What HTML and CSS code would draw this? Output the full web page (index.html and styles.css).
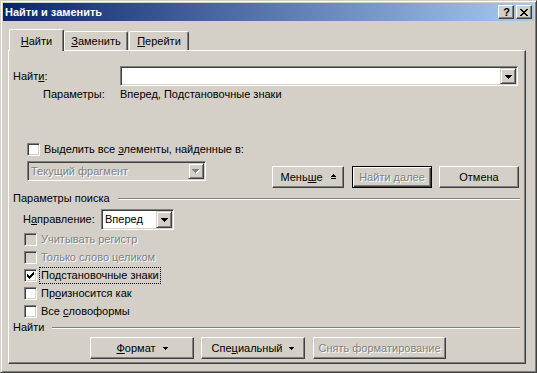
FILE: index.html
```html
<!DOCTYPE html>
<html lang="ru">
<head>
    <meta charset="UTF-8">
    <meta name="viewport" content="width=device-width, initial-scale=1.0">
    <title>Найти и заменить</title>
    <link rel="stylesheet" href="styles.css">
</head>
<body>
    <div class="window">
        <div class="titlebar">
            <span class="title">Найти и заменить</span>
            <span class="tb-btn tb-help">?</span>
            <span class="tb-btn">
                <svg width="8" height="7" viewBox="0 0 8 7" shape-rendering="crispEdges"><path d="M0 0h2v1H0zM6 0h2v1H6zM1 1h2v1H1zM5 1h2v1H5zM2 2h4v1H2zM3 3h2v1H3zM2 4h4v1H2zM1 5h2v1H1zM5 5h2v1H5zM0 6h2v1H0zM6 6h2v1H6z" fill="#000"/></svg>
            </span>
        </div>

        <div class="client">
            <div class="tabs">
                <div class="tab tab-active tab-find"><u>Н</u>айти</div>
                <div class="tab tab-replace"><u>З</u>аменить</div>
                <div class="tab tab-goto"><u>П</u>ерейти</div>
            </div>

            <div class="panel">
                <div class="find-row">
                    <span class="find-label">Найт<u>и</u>:</span>
                    <div class="combo find-combo">
                        <span class="combo-text"></span>
                        <span class="drop">
                            <svg width="7" height="4" viewBox="0 0 7 4" shape-rendering="crispEdges"><path d="M0 0h7v1H0zM1 1h5v1H1zM2 2h3v1H2zM3 3h1v1H3z" fill="#000"/></svg>
                        </span>
                    </div>
                </div>

                <div class="params-row">
                    <span class="params-label">Параметры:</span>
                    <span>Вперед, Подстановочные знаки</span>
                </div>

                <div class="check-row highlight-row">
                    <span class="check"></span>
                    <span class="check-label">Выделить все <u>э</u>лементы, найденные в:</span>
                </div>

                <div class="action-row">
                    <div class="combo combo-disabled scope-combo">
                        <span class="combo-text">Текущий фрагмент</span>
                        <span class="drop">
                            <svg width="8" height="5" viewBox="0 0 8 5" shape-rendering="crispEdges"><path d="M1 1h7v1H1zM2 2h5v1H2zM3 3h3v1H3zM4 4h1v1H4z" fill="#fff"/><path d="M0 0h7v1H0zM1 1h5v1H1zM2 2h3v1H2zM3 3h1v1H3z" fill="#808080"/></svg>
                        </span>
                    </div>
                    <div class="actions">
                        <div class="btn btn-less">Мень<u>ш</u>е
                            <svg width="5" height="5" viewBox="0 0 5 5" shape-rendering="crispEdges"><path d="M2 0h1v1H2zM1 1h3v1H1zM0 2h5v1H0zM0 4h5v1H0z" fill="#000"/></svg>
                        </div>
                        <div class="btn btn-default btn-disabled btn-next">Найти далее</div>
                        <div class="btn btn-cancel">Отмена</div>
                    </div>
                </div>

                <div class="group-title group-search">
                    <span>Параметры поиска</span>
                    <span class="groove"></span>
                </div>

                <div class="direction-row">
                    <span class="direction-label">Н<u>а</u>правление:</span>
                    <div class="combo direction-combo">
                        <span class="combo-text">Вперед</span>
                        <span class="drop">
                            <svg width="7" height="4" viewBox="0 0 7 4" shape-rendering="crispEdges"><path d="M0 0h7v1H0zM1 1h5v1H1zM2 2h3v1H2zM3 3h1v1H3z" fill="#000"/></svg>
                        </span>
                    </div>
                </div>

                <div class="options">
                    <div class="check-row option disabled">
                        <span class="check"></span>
                        <span class="check-label">Учитывать регистр</span>
                    </div>
                    <div class="check-row option disabled">
                        <span class="check"></span>
                        <span class="check-label">Только слово целиком</span>
                    </div>
                    <div class="check-row option">
                        <span class="check">
                            <svg width="13" height="13" viewBox="0 0 13 13" shape-rendering="crispEdges"><path d="M3 5h1v3H3zM4 6h1v3H4zM5 7h1v3H5zM6 6h1v3H6zM7 5h1v3H7zM8 4h1v3H8zM9 3h1v3H9z" fill="#000"/></svg>
                        </span>
                        <span class="check-label focused">Подстановочные знаки</span>
                    </div>
                    <div class="check-row option">
                        <span class="check"></span>
                        <span class="check-label">Пр<u>о</u>износится как</span>
                    </div>
                    <div class="check-row option">
                        <span class="check"></span>
                        <span class="check-label">Все <u>с</u>ловоформы</span>
                    </div>
                </div>

                <div class="group-title group-find">
                    <span>Найти</span>
                    <span class="groove"></span>
                </div>

                <div class="bottom-row">
                    <div class="btn btn-format"><u>Ф</u>ормат
                        <svg width="5" height="3" viewBox="0 0 5 3" shape-rendering="crispEdges"><path d="M0 0h5v1H0zM1 1h3v1H1zM2 2h1v1H2z" fill="#000"/></svg>
                    </div>
                    <div class="btn btn-special">Спе<u>ц</u>иальный
                        <svg width="5" height="3" viewBox="0 0 5 3" shape-rendering="crispEdges"><path d="M0 0h5v1H0zM1 1h3v1H1zM2 2h1v1H2z" fill="#000"/></svg>
                    </div>
                    <div class="btn btn-disabled btn-clear">Снять форматирование</div>
                </div>
            </div>
        </div>
    </div>
</body>
</html>
```

FILE: styles.css
```css
body {
    margin: 0;
    background-color: #D4D0C8;
    font-family: "Liberation Sans", Arial, sans-serif;
    font-size: 11px;
    line-height: 13px;
    color: #000;
}
u {
    text-decoration: underline;
    text-underline-offset: 1px;
}
.window {
    width: 537px;
    height: 373px;
    box-sizing: border-box;
    border: 1px solid;
    border-color: #D4D0C8 #404040 #404040 #D4D0C8;
    box-shadow: inset 1px 1px #fff, inset -1px -1px #808080;
    padding: 2px;
    display: flex;
    flex-direction: column;
}
.titlebar {
    height: 18px;
    flex: none;
    display: flex;
    align-items: center;
    padding: 0 2px 0 2px;
    background: linear-gradient(to right, #0A246A, #A6CAF0);
}
.title {
    color: #fff;
    font-weight: bold;
    margin-right: auto;
}
.tb-btn {
    width: 16px;
    height: 14px;
    box-sizing: border-box;
    background-color: #D4D0C8;
    border: 1px solid;
    border-color: #fff #404040 #404040 #fff;
    box-shadow: inset -1px -1px #808080;
    display: flex;
    align-items: center;
    justify-content: center;
}
.tb-help {
    margin-right: 2px;
    font-weight: bold;
    font-size: 11px;
    padding-left: 1px;
}
.client {
    flex: 1;
    display: flex;
    flex-direction: column;
    padding: 8px 8px 6px 5px;
}
.tabs {
    height: 21px;
    display: flex;
    align-items: flex-end;
    padding-left: 1px;
}
.tab {
    height: 19px;
    box-sizing: border-box;
    border-top: 1px solid #fff;
    border-left: 1px solid #fff;
    border-right: 1px solid #404040;
    border-radius: 2px 2px 0 0;
    box-shadow: inset -1px 0 #808080;
    padding-top: 3px;
    text-align: center;
    background-color: #D4D0C8;
}
.tab-active {
    height: 22px;
    margin-bottom: -1px;
    padding-top: 5px;
    position: relative;
    z-index: 1;
}
.tab-find {
    width: 55px;
}
.tab-replace {
    width: 64px;
}
.tab-goto {
    width: 60px;
    margin-left: 1px;
}
.panel {
    flex: 1;
    border: 1px solid;
    border-color: #fff #404040 #404040 #fff;
    box-shadow: inset -1px -1px #808080;
    padding-left: 4px;
}
.find-row {
    margin-top: 15px;
    height: 20px;
    display: flex;
    align-items: center;
}
.find-label {
    width: 107px;
}
.combo {
    box-sizing: border-box;
    height: 20px;
    border: 1px solid;
    border-color: #808080 #fff #fff #808080;
    box-shadow: inset 1px 1px #404040, inset -1px -1px #D4D0C8;
    background-color: #fff;
    padding: 2px 2px 2px 3px;
    display: flex;
    align-items: center;
}
.combo-text {
    flex: 1;
}
.drop {
    width: 16px;
    height: 16px;
    box-sizing: border-box;
    background-color: #D4D0C8;
    border: 1px solid;
    border-color: #D4D0C8 #404040 #404040 #D4D0C8;
    box-shadow: inset 1px 1px #fff, inset -1px -1px #808080;
    display: flex;
    align-items: center;
    justify-content: center;
    margin-right: -1px;
    padding-top: 1px;
}
.find-combo {
    width: 398px;
}
.params-row {
    margin-top: 2px;
    display: flex;
}
.params-label {
    margin-left: 30px;
    width: 77px;
}
.check-row {
    display: flex;
    align-items: center;
}
.check {
    width: 13px;
    height: 13px;
    flex: none;
    box-sizing: border-box;
    border: 1px solid;
    border-color: #808080 #fff #fff #808080;
    box-shadow: inset 1px 1px #404040, inset -1px -1px #D4D0C8;
    background-color: #fff;
    position: relative;
}
.check svg {
    position: absolute;
    left: -1px;
    top: -1px;
}
.check-label {
    margin-left: 2px;
    padding: 1px;
    border: 1px dotted transparent;
}
.check-label.focused {
    border-color: #000;
}
.highlight-row {
    margin-top: 40px;
    margin-left: 14px;
    height: 17px;
}
.action-row {
    margin-top: 3px;
    display: flex;
    align-items: flex-start;
}
.scope-combo {
    margin-left: 14px;
    width: 179px;
    background-color: #D4D0C8;
}
.combo-disabled .combo-text {
    color: #808080;
    text-shadow: 1px 1px #fff;
}
.actions {
    margin-top: 5px;
    margin-left: 66px;
    display: flex;
}
.btn {
    height: 22px;
    box-sizing: border-box;
    border: 1px solid;
    border-color: #fff #404040 #404040 #fff;
    box-shadow: inset -1px -1px #808080;
    display: flex;
    align-items: center;
    justify-content: center;
}
.btn-default {
    border-color: #000;
    box-shadow: inset 1px 1px #fff, inset -1px -1px #404040, inset -2px -2px #808080;
}
.btn-disabled {
    color: #808080;
    text-shadow: 1px 1px #fff;
}
.btn-less {
    width: 72px;
}
.btn-less svg {
    margin-left: 8px;
    margin-top: -2px;
}
.btn-next {
    width: 80px;
    margin-left: 8px;
}
.btn-cancel {
    width: 80px;
    margin-left: 7px;
}
.group-title {
    display: flex;
    align-items: center;
    padding-right: 5px;
}
.group-title .groove {
    flex: 1;
    height: 2px;
    box-sizing: border-box;
    border-top: 1px solid #808080;
    border-bottom: 1px solid #fff;
    margin-left: 8px;
}
.group-search {
    margin-top: 4px;
}
.direction-row {
    margin-top: 4px;
    display: flex;
    align-items: center;
}
.direction-label {
    margin-left: 10px;
    width: 78px;
}
.direction-combo {
    width: 73px;
    height: 21px;
}
.direction-combo .drop {
    height: 17px;
}
.options {
    display: flex;
    flex-direction: column;
}
.option {
    height: 18px;
    margin-left: 11px;
}
.option.disabled .check {
    background-color: #D4D0C8;
}
.option.disabled .check-label {
    color: #808080;
    text-shadow: 1px 1px #fff;
}
.group-find {
    margin-top: 1px;
}
.bottom-row {
    margin-top: 3px;
    margin-left: 77px;
    display: flex;
}
.btn-format,
.btn-special {
    width: 104px;
}
.btn-format svg,
.btn-special svg {
    margin-left: 7px;
}
.btn-special {
    margin-left: 7px;
}
.btn-clear {
    width: 133px;
    margin-left: 8px;
}
```
